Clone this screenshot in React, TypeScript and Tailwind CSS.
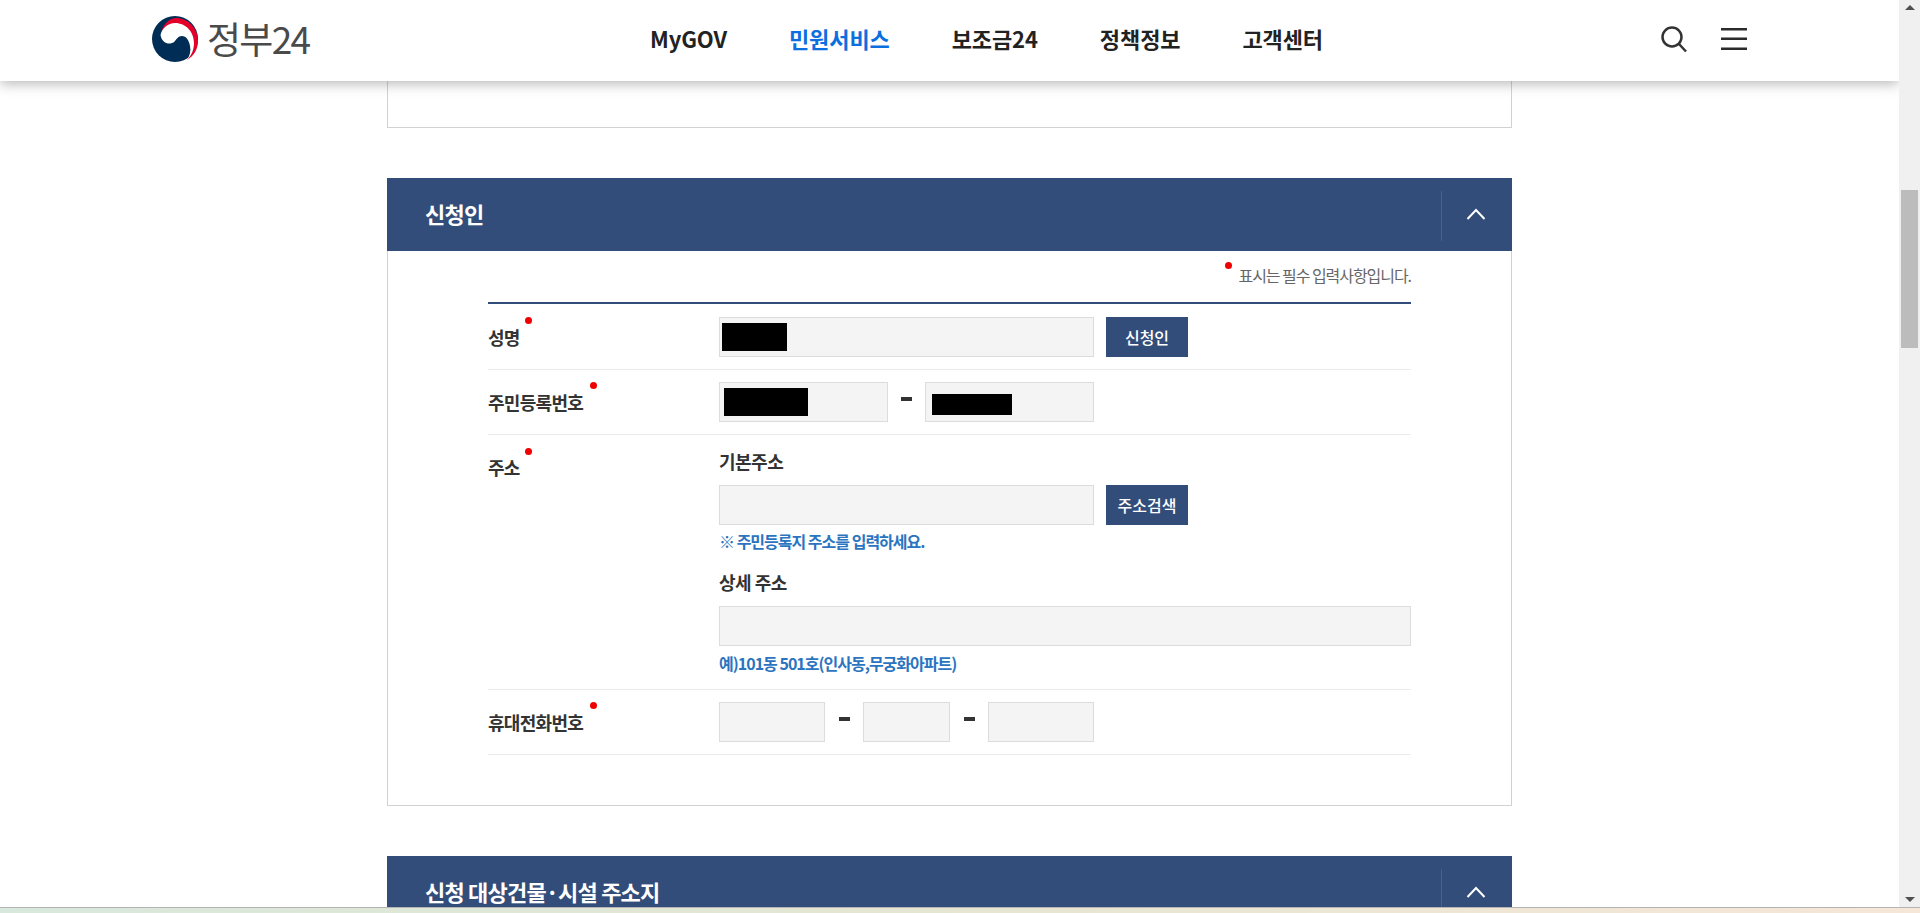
import { FC, ReactNode } from 'react';

const RequiredDot: FC<{ className: string }> = ({ className }) => (
    <span className={`absolute w-[7px] h-[7px] rounded-full bg-[#f00000] ${className}`}></span>
);

const Field: FC<{ className?: string; children?: ReactNode }> = ({ className = '', children }) => (
    <div className={`h-[40px] shrink-0 border border-[#dcdcdc] bg-[#f4f4f4] ${className}`}>{children}</div>
);

const NavyButton: FC<{ label: string }> = ({ label }) => (
    <button className="w-[82px] h-[40px] ml-[12px] bg-[#334d7a] text-white text-[16px] font-medium">
        {label}
    </button>
);

const Dash = () => <span className="w-[11px] h-[4px] mb-[6px] bg-[#333] shrink-0"></span>;

const Chevron = () => (
    <svg width="20" height="12" viewBox="0 0 20 12" fill="none" stroke="white" strokeWidth="2" className="mb-[2px]">
        <path d="M1.5 11 10 2l8.500 9" />
    </svg>
);

const SectionHeader: FC<{ title: string; className?: string }> = ({ title, className = '' }) => (
    <div className={`relative h-[73px] shrink-0 bg-[#334d7a] flex items-center pl-[38px] pr-[26px] ${className}`}>
        <h2 className="flex-1 text-white text-[22px] font-bold tracking-[-0.8px] mb-[2px]">{title}</h2>
        <span className="absolute left-[1054px] top-[13px] w-px h-[50px] bg-[#47618d]"></span>
        <Chevron />
    </div>
);

const Row: FC<{ label: string; dotClass: string; height: string; labelTop: string; children: ReactNode }> = ({
    label,
    dotClass,
    height,
    labelTop,
    children
}) => (
    <div className={`flex border-b border-[#ececec] ${height}`}>
        <div className={`w-[231px] shrink-0 ${labelTop}`}>
            <span className="relative text-[18px] font-bold text-[#333] tracking-[-0.7px] leading-[24px] inline-block">
                {label}
                <RequiredDot className={dotClass} />
            </span>
        </div>
        <div className="flex-1">{children}</div>
    </div>
);

const Logo = () => (
    <div className="flex items-center">
        <svg width="48" height="46" viewBox="0 0 48 46">
            <circle cx="24" cy="23" r="23" fill="#002d56" />
            <path d="M10 16C13 7 19 2 25 2c12 0 22 10 22 23 0 8-4 15-11 19 5-6 7-11 7-17C43 17 35 8 24 8 18 8 13 11 10 16Z" fill="#e4002b" />
            <path d="M9.500 19C11 12 17 7 24 7c11 0 19 9 19 20 0 6-2 12-7 17 3-5 4-9 3-14-1-6-4-10-8-10s-5 3-8 6c-4 3-12 2-13.500-7Z" fill="#fff" />
        </svg>
        <span className="ml-[8px] text-[37px] leading-none font-normal text-[#4a4a4a] tracking-[-1.700px]">정부24</span>
    </div>
);

const navItems = ['MyGOV', '민원서비스', '보조금24', '정책정보', '고객센터'];

const Header = () => (
    <header className="relative z-10 h-[81px] shrink-0 pb-[4px] bg-white shadow-[0_3px_12px_rgba(0,0,0,0.28)] flex items-center pl-[151px]">
        <div className="w-[499px]">
            <Logo />
        </div>
        <nav className="flex gap-[62px] text-[22px] font-bold text-[#222] tracking-[-0.1px]">
            {navItems.map((item) => (
                <a key={item} className={item === '민원서비스' ? 'text-[#0b6fe0]' : ''}>
                    {item}
                </a>
            ))}
        </nav>
        <div className="ml-auto mr-[152px] flex items-center gap-[33px]">
            <svg width="28" height="28" viewBox="0 0 28 28" fill="none" stroke="#333" strokeWidth="2.500">
                <circle cx="12" cy="12" r="9.500" />
                <path d="m19 19 7 7.500" />
            </svg>
            <svg width="26" height="24" viewBox="0 0 26 24" fill="#2b2b2b">
                <rect y="1" width="26" height="2.500" />
                <rect y="10.500" width="26" height="2.500" />
                <rect y="20.500" width="26" height="2.500" />
            </svg>
        </div>
    </header>
);

const Scrollbar = () => (
    <div className="w-[21px] shrink-0 bg-[#f0f0f0] flex flex-col items-center">
        <span className="mt-[5px] w-0 h-0 border-x-[5px] border-x-transparent border-b-[5px] border-b-[#505050]"></span>
        <span className="mt-[180px] w-[17px] h-[158px] bg-[#bcbcbc]"></span>
        <span className="mt-auto mb-[5px] w-0 h-0 border-x-[5px] border-x-transparent border-t-[5px] border-t-[#505050]"></span>
    </div>
);

const ApplicantForm = () => (
    <div className="border-x border-b border-[#d2d2d2] h-[555px] pl-[100px] pr-[100px]">
        <div className="h-[51px] flex justify-end items-start pt-[14px]">
            <span className="relative text-[16px] text-[#666] tracking-[-1.050px] leading-[20px]">
                <RequiredDot className="left-[-13px] top-[-3px]" />
                표시는 필수 입력사항입니다.
            </span>
        </div>
        <div className="border-t-2 border-[#334d7a]">
            <Row label="성명" dotClass="left-[37px] top-[-8px]" height="h-[66px]" labelTop="pt-[21px]">
                <div className="flex pt-[13px]">
                    <Field className="w-[375px] flex items-center pl-[2px]">
                        <span className="w-[65px] h-[28px] bg-black"></span>
                    </Field>
                    <NavyButton label="신청인" />
                </div>
            </Row>
            <Row label="주민등록번호" dotClass="left-[102px] top-[-8px]" height="h-[65px]" labelTop="pt-[20px]">
                <div className="flex items-center pt-[12px]">
                    <Field className="w-[169px] flex items-center pl-[4px]">
                        <span className="w-[84px] h-[28px] bg-black"></span>
                    </Field>
                    <span className="w-[37px] flex justify-center">
                        <Dash />
                    </span>
                    <Field className="w-[169px] flex items-end pl-[6px] pb-[6px]">
                        <span className="w-[80px] h-[21px] bg-black"></span>
                    </Field>
                </div>
            </Row>
            <Row label="주소" dotClass="left-[37px] top-[-7px]" height="h-[255px]" labelTop="pt-[20px]">
                <div className="pt-[14px]">
                    <p className="text-[18px] font-bold text-[#333] tracking-[-0.5px] leading-[24px]">기본주소</p>
                    <div className="flex mt-[12px]">
                        <Field className="w-[375px]" />
                        <NavyButton label="주소검색" />
                    </div>
                    <p className="mt-[6px] text-[16px] font-bold text-[#2b74c0] tracking-[-1px] leading-[20px]">
                        ※ 주민등록지 주소를 입력하세요.
                    </p>
                    <p className="mt-[19px] text-[18px] font-bold text-[#333] tracking-[-0.5px] leading-[24px]">상세 주소</p>
                    <Field className="mt-[12px]" />
                    <p className="mt-[7px] text-[16px] font-bold text-[#2b74c0] tracking-[-1px] leading-[20px]">
                        예)101동 501호(인사동,무궁화아파트)
                    </p>
                </div>
            </Row>
            <Row label="휴대전화번호" dotClass="left-[102px] top-[-8px]" height="h-[65px]" labelTop="pt-[20px]">
                <div className="flex items-center pt-[12px]">
                    <Field className="w-[106px]" />
                    <span className="w-[38px] flex justify-center">
                        <Dash />
                    </span>
                    <Field className="w-[87px]" />
                    <span className="w-[38px] flex justify-center">
                        <Dash />
                    </span>
                    <Field className="w-[106px]" />
                </div>
            </Row>
        </div>
    </div>
);

export default function App() {
    return (
        <div
            className="h-[913px] overflow-hidden flex flex-col bg-white"
            style={{ fontFamily: '"Noto Sans CJK KR", "Noto Sans", sans-serif' }}
        >
            <div className="flex flex-1 min-h-0">
                <div className="flex-1 min-w-0 flex flex-col overflow-hidden">
                    <Header />
                    <main className="w-[1125px] ml-[387px]">
                        <div className="h-[47px] border-x border-b border-[#d2d2d2]"></div>
                        <SectionHeader title="신청인" className="mt-[50px]" />
                        <ApplicantForm />
                        <SectionHeader title="신청 대상건물·시설 주소지" className="mt-[50px]" />
                    </main>
                </div>
                <Scrollbar />
            </div>
            <div className="h-[6px] shrink-0 border-t border-[#b4b4b4] bg-gradient-to-r from-[#d8e8dc] via-[#e6e6d2] to-[#f6e6d8]"></div>
        </div>
    );
}
